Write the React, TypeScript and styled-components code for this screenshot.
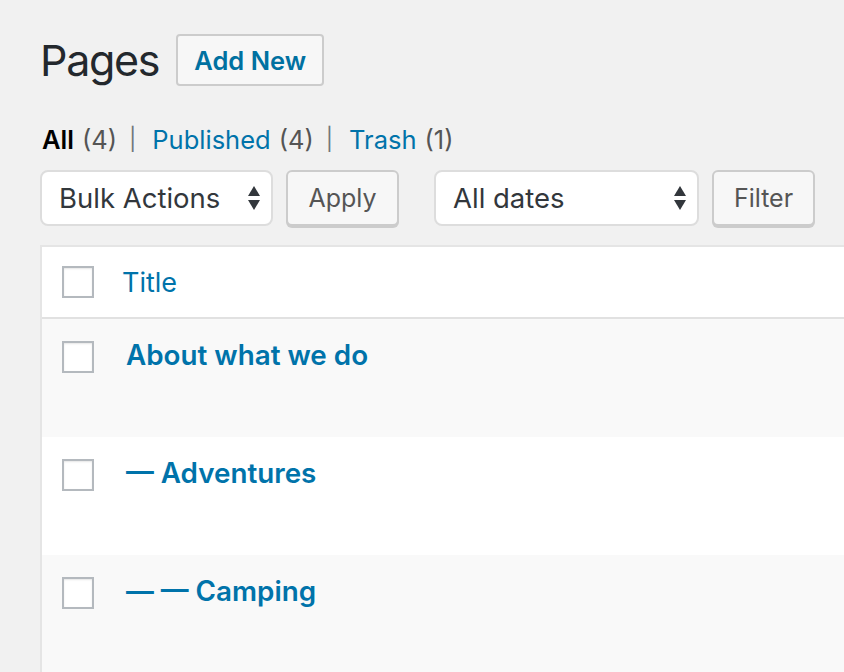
import React from "react";
import styled, { createGlobalStyle } from "styled-components";

const Global = createGlobalStyle`
  html, body { margin: 0; padding: 0; background: #f1f1f1; }
  body { font-family: Inter, "Noto Sans", sans-serif; color: #444; overflow: hidden; }
`;

const Wrap = styled.div`
  padding: 34px 0 0 40px;
  width: 844px;
  height: 672px;
  box-sizing: border-box;
  overflow: hidden;
`;

const HeaderRow = styled.div`
  display: flex;
  align-items: center;
  gap: 17px;
  height: 52px;
`;

const Title = styled.h1`
  margin: 0;
  font-size: 43px;
  font-weight: 400;
  color: #23282d;
  letter-spacing: -1.3px;
  line-height: 1;
`;

const AddNew = styled.button`
  height: 52px;
  padding: 0 16px;
  border: 2px solid #ccc;
  border-radius: 4px;
  background: #f7f7f7;
  color: #0071a1;
  font-family: inherit;
  font-size: 25.5px;
  font-weight: 600;
`;

const Views = styled.ul`
  list-style: none;
  margin: 0;
  padding: 0 0 0 2px;
  display: flex;
  align-items: center;
  height: 40px;
  margin-top: 33px;
  font-size: 25.5px;
  color: #555;
`;

const View = styled.li`
  display: flex;
  align-items: center;
`;

const ViewLink = styled.span<{ $current?: boolean }>`
  color: ${(p) => (p.$current ? "#000" : "#0073aa")};
  font-weight: ${(p) => (p.$current ? 600 : 400)};
  margin-right: 8px;
`;

const Count = styled.span`
  color: #555;
`;

const Sep = styled.span`
  color: #72777c;
  font-size: 22px;
  margin: 0 16px 0 12px;
`;

const Toolbar = styled.div`
  display: flex;
  align-items: flex-start;
  margin-top: 11px;
  height: 58px;
`;

const Group = styled.div`
  display: flex;
  gap: 13px;
  margin-right: 35px;
`;

const Select = styled.div<{ $w: number }>`
  width: ${(p) => p.$w}px;
  height: 56px;
  box-sizing: border-box;
  background: #fff;
  border: 2px solid #ddd;
  border-radius: 8px;
  display: flex;
  align-items: center;
  justify-content: space-between;
  padding: 0 10px 0 17px;
  font-size: 27.5px;
  color: #32373c;
`;

const Button = styled.button<{ $w: number }>`
  width: ${(p) => p.$w}px;
  height: 56px;
  border: 2px solid #ccc;
  border-radius: 6px;
  background: #f7f7f7;
  box-shadow: 0 2px 0 #ccc;
  color: #555;
  font-family: inherit;
  font-size: 25px;
`;

const Arrows = () => (
  <svg width="14" height="26" viewBox="0 0 14 26">
    <path d="M7 1 L13 11 L1 11 Z" fill="#32373c" />
    <path d="M1 15 L13 15 L7 25 Z" fill="#32373c" />
  </svg>
);

const Table = styled.div`
  margin-top: 17px;
  width: 900px;
  border: 2px solid #e5e5e5;
  border-right: none;
  background: #fff;
  box-sizing: border-box;
`;

const HeadRow = styled.div`
  display: flex;
  align-items: center;
  height: 72px;
  border-bottom: 2px solid #e1e1e1;
  box-sizing: border-box;
`;

const Row = styled.div<{ $alt?: boolean }>`
  display: flex;
  align-items: flex-start;
  height: 118px;
  background: ${(p) => (p.$alt ? "#f9f9f9" : "#fff")};
  padding-top: 22px;
  box-sizing: border-box;
`;

const Check = styled.span`
  display: block;
  width: 32px;
  height: 32px;
  box-sizing: border-box;
  border: 2px solid #b4b9be;
  background: #fff;
  box-shadow: inset 0 1px 2px rgba(0,0,0,0.1);
  margin-left: 20px;
  flex: none;
`;

const HeadTitle = styled.span`
  margin-left: 28px;
  font-size: 27px;
  color: #0073aa;
`;

const RowTitle = styled.span`
  margin-left: 32px;
  font-size: 27.8px;
  font-weight: 600;
  color: #0073aa;
  line-height: 28px;
`;

const rows = ["About what we do", "— Adventures", "— — Camping"];

export default function App() {
  return (
    <>
      <Global />
      <Wrap>
        <HeaderRow>
          <Title>Pages</Title>
          <AddNew>Add New</AddNew>
        </HeaderRow>
        <Views>
          <View>
            <ViewLink $current>All</ViewLink>
            <Count>(4)</Count>
            <Sep>|</Sep>
          </View>
          <View>
            <ViewLink>Published</ViewLink>
            <Count>(4)</Count>
            <Sep>|</Sep>
          </View>
          <View>
            <ViewLink>Trash</ViewLink>
            <Count>(1)</Count>
          </View>
        </Views>
        <Toolbar>
          <Group>
            <Select $w={233}>
              Bulk Actions
              <Arrows />
            </Select>
            <Button $w={113}>Apply</Button>
          </Group>
          <Group>
            <Select $w={265}>
              All dates
              <Arrows />
            </Select>
            <Button $w={103}>Filter</Button>
          </Group>
        </Toolbar>
        <Table>
          <HeadRow>
            <Check />
            <HeadTitle>Title</HeadTitle>
          </HeadRow>
          {rows.map((r, i) => (
            <Row key={r} $alt={i % 2 === 0}>
              <Check />
              <RowTitle>{r}</RowTitle>
            </Row>
          ))}
        </Table>
      </Wrap>
    </>
  );
}
